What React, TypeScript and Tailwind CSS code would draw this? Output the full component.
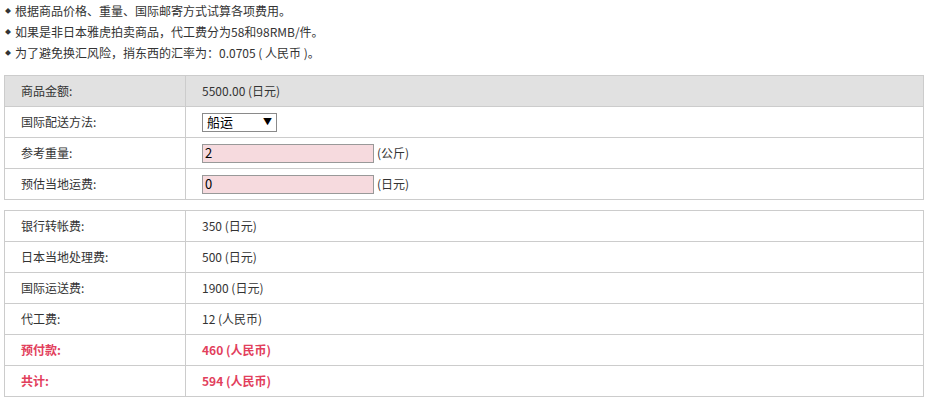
import React from "react";

const font = { fontFamily: '"Noto Sans CJK SC", "Noto Sans", sans-serif' };

function Row({ label, children, red, gray }: { label: string; children: React.ReactNode; red?: boolean; gray?: boolean }) {
  return (
    <tr className={`h-[31px] ${gray ? "bg-[#e1e1e1]" : ""}`}>
      <td className={`w-[181px] border border-[#cccccc] pl-[16px] p-0 align-middle ${red ? "text-[#e2405c] font-bold" : ""}`}>{label}</td>
      <td className={`border border-[#cccccc] pl-[16px] p-0 align-middle ${red ? "text-[#e2405c] font-bold" : ""}`}>{children}</td>
    </tr>
  );
}

export default function App() {
  return (
    <div className="w-[929px] h-[408px] bg-white text-[#333333] text-[12px]" style={font}>
      <ul className="pl-[5px]">
        {[
          "根据商品价格、重量、国际邮寄方式试算各项费用。",
          "如果是非日本雅虎拍卖商品，代工费分为58和98RMB/件。",
          "为了避免换汇风险，捎东西的汇率为：0.0705 ( 人民币 )。",
        ].map((t) => (
          <li key={t} className="flex items-center h-[21px]">
            <span className="text-[6px] w-[10px] text-[#333]">◆</span>
            <span>{t}</span>
          </li>
        ))}
      </ul>
      <div className="pl-[4px] mt-[12px]">
        <table className="w-[920px] border-collapse">
          <tbody>
            <Row label="商品金额:" gray>5500.00 (日元)</Row>
            <Row label="国际配送方法:">
              <div className="w-[75px] h-[19px] border border-[#8a8a8a] bg-white flex items-center justify-between px-[4px] text-[13px] text-black">
                <span>船运</span>
                <span className="text-[9px]">▼</span>
              </div>
            </Row>
            <Row label="参考重量:">
              <span className="inline-flex items-center">
                <span className="inline-flex items-center w-[172px] h-[19px] border border-[#999999] bg-[#f6dade] pl-[2px] text-[13px] text-black">2</span>
                <span className="ml-[3px]">(公斤)</span>
              </span>
            </Row>
            <Row label="预估当地运费:">
              <span className="inline-flex items-center">
                <span className="inline-flex items-center w-[172px] h-[19px] border border-[#999999] bg-[#f6dade] pl-[2px] text-[13px] text-black">0</span>
                <span className="ml-[3px]">(日元)</span>
              </span>
            </Row>
          </tbody>
        </table>
        <table className="w-[920px] border-collapse mt-[10px]">
          <tbody>
            <Row label="银行转帐费:">350 (日元)</Row>
            <Row label="日本当地处理费:">500 (日元)</Row>
            <Row label="国际运送费:">1900 (日元)</Row>
            <Row label="代工费:">12 (人民币)</Row>
            <Row label="预付款:" red>460 (人民币)</Row>
            <Row label="共计:" red>594 (人民币)</Row>
          </tbody>
        </table>
      </div>
    </div>
  );
}
